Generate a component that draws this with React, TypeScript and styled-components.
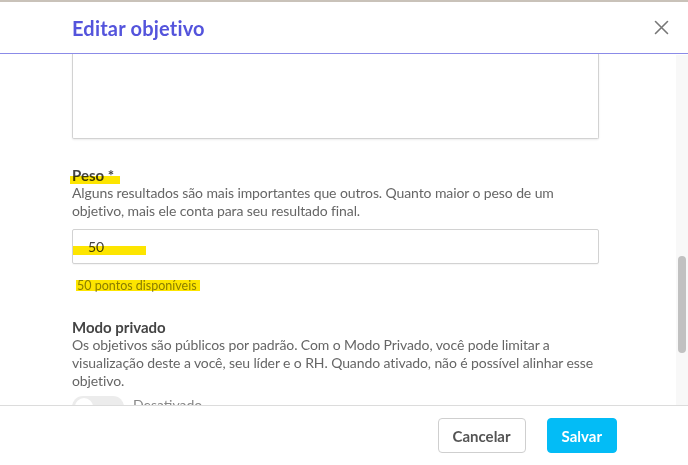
import styled, { createGlobalStyle } from 'styled-components';

const GlobalStyle = createGlobalStyle`
  html, body {
    margin: 0;
    padding: 0;
    background: #fff;
  }
  body {
    font-family: 'Lato', 'Liberation Sans', sans-serif;
    color: #555;
  }
`;

const Modal = styled.div`
  width: 688px;
  height: 465px;
  display: flex;
  flex-direction: column;
  background: #fff;
  border-top: 2px solid #c9c2b9;
  box-sizing: border-box;
  overflow: hidden;
`;

const Header = styled.header`
  height: 51px;
  flex-shrink: 0;
  display: flex;
  align-items: center;
  justify-content: space-between;
  padding: 0 19px 0 72px;
  border-bottom: 1px solid #8b8be8;
`;

const Title = styled.h2`
  margin: 0;
  font-size: 20px;
  font-weight: 700;
  color: #5454dc;
  letter-spacing: 0.2px;
`;

const CloseButton = styled.button`
  border: none;
  background: none;
  padding: 0;
  width: 15px;
  height: 15px;
  display: flex;
  cursor: pointer;
`;

const Body = styled.div`
  flex: 1;
  display: flex;
  overflow: hidden;
`;

const Content = styled.div`
  flex: 1;
  padding: 0 77px 0 72px;
`;

const ScrollTrack = styled.div`
  width: 12px;
  margin-top: 1px;
  background: #f8f8f8;
  display: flex;
  justify-content: center;
`;

const ScrollThumb = styled.div`
  width: 8px;
  height: 97px;
  margin-top: 201px;
  border-radius: 4px;
  background: #c1c1c1;
`;

const TextArea = styled.div`
  height: 84px;
  border: 1px solid #d2d2d2;
  border-top: none;
  border-radius: 0 0 2px 2px;
  box-shadow: 0 1px 2px rgba(0, 0, 0, 0.08);
`;

const Field = styled.section<{ $top: number }>`
  margin-top: ${(p) => p.$top}px;
`;

const Label = styled.div`
  position: relative;
  display: inline-block;
  font-size: 15px;
  font-weight: 700;
  color: #444;
  line-height: 18px;
`;

const Marker = styled.span<{ $left: number; $width: number; $top: number; $height: number }>`
  position: absolute;
  left: ${(p) => p.$left}px;
  top: ${(p) => p.$top}px;
  width: ${(p) => p.$width}px;
  height: ${(p) => p.$height}px;
  background: #fde500;
  mix-blend-mode: multiply;
  pointer-events: none;
`;

const Help = styled.p`
  margin: 0;
  font-size: 14px;
  line-height: 18px;
  letter-spacing: -0.1px;
  color: #666;
`;

const InputBox = styled.div`
  position: relative;
  margin-top: 9px;
  height: 33px;
  border: 1px solid #d2d2d2;
  border-radius: 2px;
  display: flex;
  align-items: center;
  padding-left: 15px;
  font-size: 14px;
  color: #444;
  box-shadow: 0 1px 1px rgba(0, 0, 0, 0.04);
`;

const Points = styled.div`
  position: relative;
  display: inline-block;
  margin: 14px 0 0 5px;
  font-size: 12.5px;
  line-height: 15px;
  color: #8c8c7a;
`;

const ToggleRow = styled.div`
  display: flex;
  align-items: flex-start;
  gap: 9px;
  margin-top: 6px;
`;

const Toggle = styled.div`
  width: 52px;
  height: 22px;
  border-radius: 11px;
  background: #ececec;
  display: flex;
  align-items: center;
  padding-left: 3px;
  box-sizing: border-box;
`;

const Knob = styled.div`
  width: 18px;
  height: 18px;
  border-radius: 50%;
  background: #fff;
`;

const ToggleText = styled.span`
  font-size: 14px;
  line-height: 18px;
  color: #888;
`;

const Footer = styled.footer`
  height: 60px;
  flex-shrink: 0;
  border-top: 1px solid #dcdcdc;
  display: flex;
  align-items: center;
  justify-content: flex-end;
  gap: 21px;
  padding-right: 71px;
  box-sizing: border-box;
`;

const Button = styled.button<{ $primary?: boolean }>`
  height: 35px;
  padding: 0 14px;
  border-radius: 4px;
  font-family: 'Lato', 'Liberation Sans', sans-serif;
  font-size: 15px;
  font-weight: 700;
  cursor: pointer;
  border: 1px solid ${(p) => (p.$primary ? '#03bcf6' : '#cfcfcf')};
  background: ${(p) => (p.$primary ? '#03bcf6' : '#fff')};
  color: ${(p) => (p.$primary ? '#fff' : '#555')};
`;

function CloseIcon() {
  return (
    <svg width='15' height='15' viewBox='0 0 15 15'>
      <path d='M1.5 1.5 L13.5 13.5 M13.5 1.5 L1.5 13.5' stroke='#777' strokeWidth='1.6' strokeLinecap='round' />
    </svg>
  );
}

export default function App() {
  return (
    <>
      <GlobalStyle />
      <Modal>
        <Header>
          <Title>Editar objetivo</Title>
          <CloseButton aria-label='Fechar'>
            <CloseIcon />
          </CloseButton>
        </Header>

        <Body>
          <Content>
            <TextArea />

            <Field $top={26}>
              <Label>
                Peso *
                <Marker $left={-2} $width={50} $top={10} $height={8} />
              </Label>
              <Help>
                Alguns resultados são mais importantes que outros. Quanto maior o peso de um objetivo, mais ele
                conta para seu resultado final.
              </Help>
              <InputBox>
                50
                <Marker $left={0} $width={73} $top={16} $height={9} />
              </InputBox>
              <Points>
                50 pontos disponíveis
                <Marker $left={-1} $width={124} $top={2} $height={11} />
              </Points>
            </Field>

            <Field $top={24}>
              <Label>Modo privado</Label>
              <Help>
                Os objetivos são públicos por padrão. Com o Modo Privado, você pode limitar a visualização deste a
                você, seu líder e o RH. Quando ativado, não é possível alinhar esse objetivo.
              </Help>
              <ToggleRow>
                <Toggle>
                  <Knob />
                </Toggle>
                <ToggleText>Desativado</ToggleText>
              </ToggleRow>
            </Field>
          </Content>
          <ScrollTrack>
            <ScrollThumb />
          </ScrollTrack>
        </Body>

        <Footer>
          <Button>Cancelar</Button>
          <Button $primary>Salvar</Button>
        </Footer>
      </Modal>
    </>
  );
}
